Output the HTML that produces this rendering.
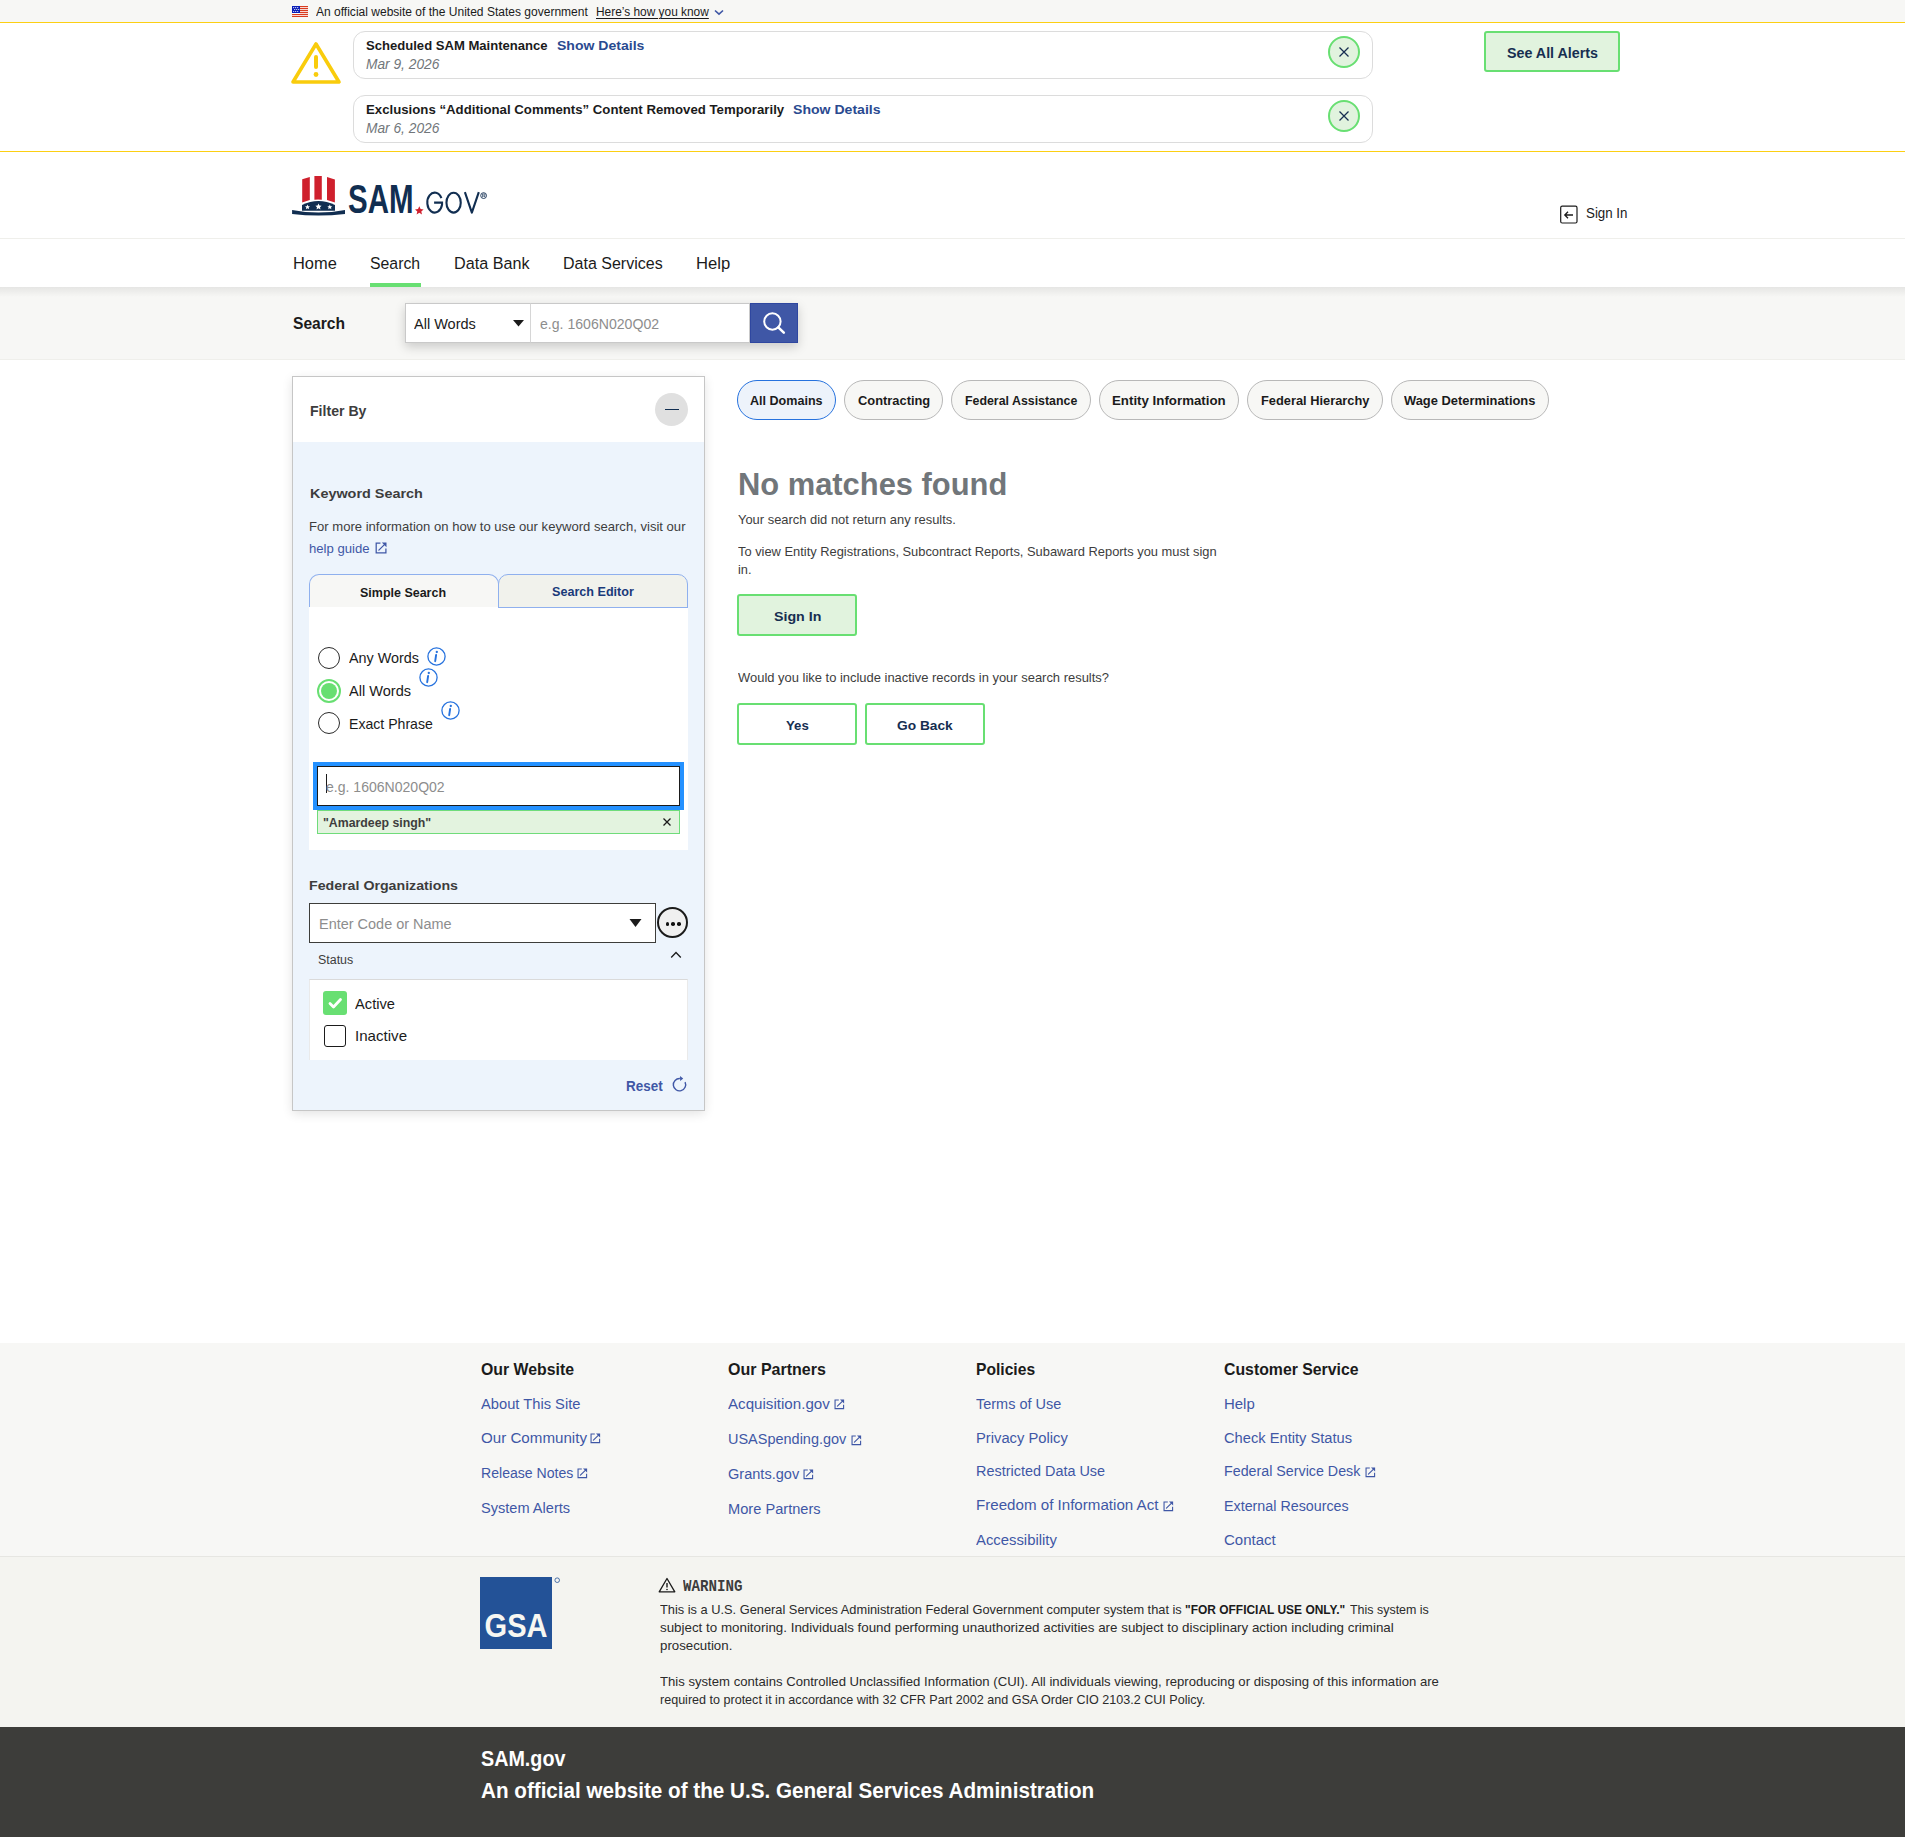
<!DOCTYPE html>
<html><head><meta charset="utf-8"><title>SAM.gov Search</title><style>
html,body{margin:0;padding:0;background:#fff;}
body{width:1905px;height:1837px;position:relative;overflow:hidden;font-family:"Liberation Sans", sans-serif;}
.t{position:absolute;white-space:nowrap;line-height:1;font-family:"Liberation Sans", sans-serif;}
.b{position:absolute;}
</style></head>
<body>
<div class="b" style="left:0px;top:0px;width:1905px;height:22px;background:#f7f7f5"></div>
<div class="b" style="left:0px;top:22px;width:1905px;height:1px;background:#fccf13"></div>
<svg class="b" style="left:292px;top:6px" width="16" height="11" viewBox="0 0 16 11">
<rect x="0" y="0" width="16" height="11" fill="#fff"/>
<g fill="#d83b1e"><rect x="8" y="0" width="8" height="1.2"/><rect x="8" y="2" width="8" height="1.2"/><rect x="8" y="4" width="8" height="1.2"/><rect x="8" y="6" width="8" height="1.2"/><rect x="0" y="8" width="16" height="1.2"/><rect x="0" y="10" width="16" height="1"/></g>
<rect x="0" y="0" width="8" height="7" fill="#0b1fb8"/>
<g fill="#fff"><circle cx="1.7" cy="1.6" r=".6"/><circle cx="3.7" cy="1.6" r=".6"/><circle cx="5.7" cy="1.6" r=".6"/><circle cx="2.7" cy="3.5" r=".6"/><circle cx="4.7" cy="3.5" r=".6"/><circle cx="6.7" cy="3.5" r=".6"/><circle cx="1.7" cy="5.5" r=".6"/><circle cx="3.7" cy="5.5" r=".6"/><circle cx="5.7" cy="5.5" r=".6"/></g>
</svg>
<div class="t " style="left:315.70px;top:6.00px;font-size:12.3px;font-weight:400;color:#1b1b1b;transform:scaleX(0.9779);transform-origin:0 0;">An official website of the United States government</div>
<div class="t " style="left:596.00px;top:6.00px;font-size:12.3px;font-weight:400;color:#1b1b1b;transform:scaleX(0.9672);transform-origin:0 0;text-decoration:underline;text-underline-offset:2px;">Here’s how you know</div>
<svg class="b" style="left:714px;top:9px" width="10" height="7" viewBox="0 0 10 7"><path d="M1 1.5 L5 5.2 L9 1.5" fill="none" stroke="#3f57a6" stroke-width="1.6"/></svg>
<div class="b" style="left:0px;top:151px;width:1905px;height:1px;background:#fccf13"></div>
<svg class="b" style="left:290px;top:40px" width="52" height="46" viewBox="0 0 52 46">
<path d="M26 4 L49 42 L3 42 Z" fill="none" stroke="#f9cc0c" stroke-width="3.6" stroke-linejoin="round"/>
<rect x="24" y="15" width="4" height="14" rx="2" fill="#f9cc0c"/><circle cx="26" cy="34.5" r="2.4" fill="#f9cc0c"/>
</svg>
<div class="b" style="left:352.5px;top:31px;width:1020.5px;height:48px;border:1px solid #dcdcdc;border-radius:12px;box-sizing:border-box;background:#fff"></div>
<div class="t " style="left:365.60px;top:39.00px;font-size:13.5px;font-weight:700;color:#1b1b1b;transform:scaleX(0.9685);transform-origin:0 0;">Scheduled SAM Maintenance</div>
<div class="t " style="left:556.60px;top:39.00px;font-size:13.5px;font-weight:700;color:#2a4a90;transform:scaleX(1.0400);transform-origin:0 0;">Show Details</div>
<div class="t " style="left:365.60px;top:57.00px;font-size:14.9px;font-weight:400;color:#71767a;font-style:italic;transform:scaleX(0.9225);transform-origin:0 0;">Mar 9, 2026</div>
<div class="b" style="left:1328px;top:36px;width:32px;height:32px;border:2px solid #68df72;border-radius:50%;background:#e1f3de;box-sizing:border-box"></div>
<svg class="b" style="left:1338px;top:46px" width="12" height="12" viewBox="0 0 12 12"><path d="M1.5 1.5 L10.5 10.5 M10.5 1.5 L1.5 10.5" stroke="#162e51" stroke-width="1.25"/></svg>
<div class="b" style="left:352.5px;top:95px;width:1020.5px;height:48px;border:1px solid #dcdcdc;border-radius:12px;box-sizing:border-box;background:#fff"></div>
<div class="t " style="left:365.60px;top:103.00px;font-size:13.5px;font-weight:700;color:#1b1b1b;transform:scaleX(0.9786);transform-origin:0 0;">Exclusions “Additional Comments” Content Removed Temporarily</div>
<div class="t " style="left:792.90px;top:103.00px;font-size:13.5px;font-weight:700;color:#2a4a90;transform:scaleX(1.0424);transform-origin:0 0;">Show Details</div>
<div class="t " style="left:365.60px;top:121.00px;font-size:14.9px;font-weight:400;color:#71767a;font-style:italic;transform:scaleX(0.9225);transform-origin:0 0;">Mar 6, 2026</div>
<div class="b" style="left:1328px;top:100px;width:32px;height:32px;border:2px solid #68df72;border-radius:50%;background:#e1f3de;box-sizing:border-box"></div>
<svg class="b" style="left:1338px;top:110px" width="12" height="12" viewBox="0 0 12 12"><path d="M1.5 1.5 L10.5 10.5 M10.5 1.5 L1.5 10.5" stroke="#162e51" stroke-width="1.25"/></svg>
<div class="b" style="left:1484px;top:31px;width:136px;height:41px;border:2px solid #68df72;border-radius:3px;background:#e1f3de;box-sizing:border-box"></div>
<div class="t " style="left:1507.00px;top:47.00px;font-size:13.8px;font-weight:700;color:#162e51;transform:scaleX(1.0344);transform-origin:0 0;">See All Alerts</div>
<svg class="b" style="left:291px;top:175px" width="200" height="42" viewBox="0 0 200 42">
<path d="M11.2 4.2 L18.8 1.9 L18.8 25 L11.2 27.6 Z" fill="#cf202d"/>
<path d="M23.4 1.1 H30.8 V24.7 Q27.1 24.4 23.4 24.7 Z" fill="#cf202d"/>
<path d="M36 1.9 L43.9 4.4 L43.9 27.6 L36 25 Z" fill="#cf202d"/>
<path d="M11 29.9 Q27.4 22.1 44 29.9 L44 35.7 L11 35.7 Z" fill="#112e51"/>
<g fill="#fff"><path d="M16.5 29.6 l.75 1.55 1.7.2-1.25 1.15.35 1.7-1.55-.85-1.55.85.35-1.7-1.25-1.15 1.7-.2z"/><path d="M27.5 28.6 l.95 1.95 2.15.25-1.6 1.45.45 2.15-1.95-1.05-1.95 1.05.45-2.15-1.6-1.45 2.15-.25z"/><path d="M38.8 29.6 l.75 1.55 1.7.2-1.25 1.15.35 1.7-1.55-.85-1.55.85.35-1.7-1.25-1.15 1.7-.2z"/></g>
<path d="M1.1 34.9 Q27.5 40.1 54 34.9 L54 39 Q27.5 42.2 1.1 39 Z" fill="#112e51"/>
<path d="M128.3 31.3 l1.3 2.8 3 .3-2.3 2 .7 3-2.7-1.6-2.7 1.6.7-3-2.3-2 3-.3z" fill="#d0202e"/>
</svg>
<div class="t " style="left:347.70px;top:179.00px;font-size:40.5px;font-weight:700;color:#112e51;transform:scaleX(0.7274);transform-origin:0 0;">SAM</div>
<svg class="b" style="left:420px;top:185px" width="72" height="35" viewBox="0 0 72 35">
<g fill="none" stroke="#112e51" stroke-width="2.1">
<path d="M21.4 13.1 A7.45 9.95 0 1 0 22.05 19.6 L22.05 17.6 L14.1 17.6"/>
<ellipse cx="33.6" cy="17.7" rx="7.15" ry="9.95"/>
<path d="M44.9 7.1 L51.85 27.6 L58.8 7.1" stroke-linejoin="round"/>
<circle cx="63.6" cy="10.6" r="2.9" stroke-width=".9"/>
</g>
<path d="M62.6 12.2 V9 H64 Q65.2 9 65.2 10 Q65.2 11 64 11 H63 M64.2 11 L65.2 12.2" fill="none" stroke="#112e51" stroke-width=".7"/>
</svg>
<svg class="b" style="left:1560px;top:205px" width="18" height="19" viewBox="0 0 18 19"><rect x="0.7" y="1.2" width="16.3" height="16.8" rx="1.5" fill="none" stroke="#1b1b1b" stroke-width="1.2"/><path d="M13 10 H5 M8 6.8 L4.8 10 L8 13.2" fill="none" stroke="#1b1b1b" stroke-width="1.3"/></svg>
<div class="t " style="left:1586.10px;top:205.00px;font-size:15.4px;font-weight:400;color:#1b1b1b;transform:scaleX(0.8651);transform-origin:0 0;">Sign In</div>
<div class="b" style="left:0px;top:238px;width:1905px;height:1px;background:#efefeb"></div>
<div class="t " style="left:292.80px;top:256.00px;font-size:16.9px;font-weight:400;color:#1b1b1b;transform:scaleX(0.9729);transform-origin:0 0;">Home</div>
<div class="t " style="left:370.10px;top:256.00px;font-size:16.9px;font-weight:400;color:#1b1b1b;transform:scaleX(0.9370);transform-origin:0 0;">Search</div>
<div class="t " style="left:454.20px;top:256.00px;font-size:16.9px;font-weight:400;color:#1b1b1b;transform:scaleX(0.9569);transform-origin:0 0;">Data Bank</div>
<div class="t " style="left:563.10px;top:256.00px;font-size:16.9px;font-weight:400;color:#1b1b1b;transform:scaleX(0.9477);transform-origin:0 0;">Data Services</div>
<div class="t " style="left:695.90px;top:256.00px;font-size:16.9px;font-weight:400;color:#1b1b1b;transform:scaleX(0.9848);transform-origin:0 0;">Help</div>
<div class="b" style="left:370px;top:283px;width:51px;height:4px;background:#68df72"></div>
<div class="b" style="left:0px;top:287px;width:1905px;height:73px;background:#f7f7f5;border-bottom:1px solid #efefeb;box-sizing:border-box"></div>
<div class="b" style="left:0px;top:287px;width:1905px;height:10px;background:linear-gradient(rgba(0,0,0,0.07),rgba(0,0,0,0))"></div>
<div class="t " style="left:292.70px;top:315.00px;font-size:16.5px;font-weight:700;color:#1b1b1b;transform:scaleX(0.9450);transform-origin:0 0;">Search</div>
<div class="b" style="left:405px;top:303px;width:393px;height:40px;box-shadow:0 4px 10px rgba(0,0,0,0.18);background:#fff"></div>
<div class="b" style="left:405px;top:303px;width:126px;height:40px;border:1px solid #c9c9c9;box-sizing:border-box;background:#fff"></div>
<div class="t " style="left:414.00px;top:316.00px;font-size:15.1px;font-weight:400;color:#1b1b1b;transform:scaleX(0.9623);transform-origin:0 0;">All Words</div>
<svg class="b" style="left:513px;top:320px" width="11" height="7" viewBox="0 0 11 7"><path d="M0 0 H11 L5.5 6.5 Z" fill="#1b1b1b"/></svg>
<div class="b" style="left:530px;top:303px;width:220px;height:40px;border:1px solid #c9c9c9;border-left:1px solid #d6d6d6;box-sizing:border-box;background:#fff"></div>
<div class="t " style="left:540.20px;top:316.00px;font-size:15.1px;font-weight:400;color:#8d8d8d;transform:scaleX(0.9334);transform-origin:0 0;">e.g. 1606N020Q02</div>
<div class="b" style="left:750px;top:303px;width:48px;height:40px;background:#3f57a6;border:1px solid #2f47a0;box-sizing:border-box"></div>
<svg class="b" style="left:760px;top:311px" width="28" height="26" viewBox="0 0 28 26"><circle cx="12.4" cy="10.5" r="8.2" fill="none" stroke="#fff" stroke-width="2"/><path d="M18.3 16.4 L23.8 21.6" stroke="#fff" stroke-width="2.6" stroke-linecap="round"/></svg>
<div class="b" style="left:292px;top:376px;width:413px;height:735px;border:1px solid #c6c6c6;box-sizing:border-box;background:#edf4fc;box-shadow:0 3px 10px rgba(0,0,0,0.11)"></div>
<div class="b" style="left:293px;top:377px;width:411px;height:65px;background:#fff"></div>
<div class="t " style="left:309.60px;top:404.00px;font-size:14.5px;font-weight:700;color:#3d3d3d;transform:scaleX(0.9724);transform-origin:0 0;">Filter By</div>
<div class="b" style="left:655px;top:393px;width:33px;height:33px;background:#e0e0e0;border-radius:50%"></div>
<div class="b" style="left:665px;top:408.7px;width:14px;height:1.6px;background:#112e51"></div>
<div class="t " style="left:309.60px;top:487.00px;font-size:13.7px;font-weight:700;color:#3d3d3d;transform:scaleX(1.0518);transform-origin:0 0;">Keyword Search</div>
<div class="t " style="left:309.40px;top:520.00px;font-size:13.3px;font-weight:400;color:#3d3d3d;transform:scaleX(0.9835);transform-origin:0 0;">For more information on how to use our keyword search, visit our</div>
<div class="t " style="left:309.40px;top:542.00px;font-size:13.3px;font-weight:400;color:#3f57a6;transform:scaleX(0.9873);transform-origin:0 0;">help guide</div>
<svg class="b" style="left:374.8px;top:542.2px" width="12.5" height="12.5" viewBox="0 0 11 11"><path d="M4.8 1.05 H1.05 V9.6 H9.6 V5.8" fill="none" stroke="#3f57a6" stroke-width="1.1"/><path d="M3.4 7.2 L8.3 2.3" fill="none" stroke="#3f57a6" stroke-width="1.1" stroke-linecap="round"/><path d="M6 0.5 H10.1 V4.6 Z" fill="#3f57a6"/></svg>
<div class="b" style="left:309px;top:574px;width:190px;height:34px;background:#f7f7f5;border:1px solid #8fb0ee;border-bottom:none;border-radius:10px 10px 0 0;box-sizing:border-box"></div>
<div class="b" style="left:498px;top:574px;width:190px;height:34px;background:#f1f2ec;border:1px solid #8fb0ee;border-radius:10px 10px 0 0;box-sizing:border-box"></div>
<div class="t " style="left:360.30px;top:587.00px;font-size:12.2px;font-weight:700;color:#1b1b1b;transform:scaleX(1.0243);transform-origin:0 0;">Simple Search</div>
<div class="t " style="left:552.00px;top:586.00px;font-size:12.2px;font-weight:700;color:#1a3a7a;transform:scaleX(1.0328);transform-origin:0 0;">Search Editor</div>
<div class="b" style="left:309px;top:607px;width:379px;height:243px;background:#fff"></div>
<div class="b" style="left:498px;top:607px;width:190px;height:1px;background:#8fb0ee"></div>
<div class="b" style="left:318px;top:647px;width:22px;height:22px;border:1.6px solid #2b2b2b;border-radius:50%;box-sizing:border-box;background:#fff"></div>
<div class="t " style="left:349.20px;top:650.00px;font-size:15px;font-weight:400;color:#1b1b1b;transform:scaleX(0.9582);transform-origin:0 0;">Any Words</div>
<svg class="b" style="left:426.5px;top:646.5px" width="19" height="19" viewBox="0 0 19 19"><circle cx="9.5" cy="9.5" r="8.6" fill="none" stroke="#2672de" stroke-width="1.3"/><path d="M9.1 8 L8.2 14.2" stroke="#2672de" stroke-width="1.9" stroke-linecap="round"/><circle cx="9.8" cy="5" r="1.15" fill="#2672de"/></svg>
<div class="b" style="left:317px;top:679px;width:24px;height:24px;border:2.2px solid #68df72;border-radius:50%;box-sizing:border-box;background:#fff"></div>
<div class="b" style="left:321px;top:683px;width:16px;height:16px;background:#68df72;border-radius:50%"></div>
<div class="t " style="left:349.20px;top:683.00px;font-size:15px;font-weight:400;color:#1b1b1b;transform:scaleX(0.9703);transform-origin:0 0;">All Words</div>
<svg class="b" style="left:418.5px;top:667.5px" width="19" height="19" viewBox="0 0 19 19"><circle cx="9.5" cy="9.5" r="8.6" fill="none" stroke="#2672de" stroke-width="1.3"/><path d="M9.1 8 L8.2 14.2" stroke="#2672de" stroke-width="1.9" stroke-linecap="round"/><circle cx="9.8" cy="5" r="1.15" fill="#2672de"/></svg>
<div class="b" style="left:318px;top:712px;width:22px;height:22px;border:1.6px solid #2b2b2b;border-radius:50%;box-sizing:border-box;background:#fff"></div>
<div class="t " style="left:349.20px;top:716.00px;font-size:15px;font-weight:400;color:#1b1b1b;transform:scaleX(0.9397);transform-origin:0 0;">Exact Phrase</div>
<svg class="b" style="left:440.5px;top:700.5px" width="19" height="19" viewBox="0 0 19 19"><circle cx="9.5" cy="9.5" r="8.6" fill="none" stroke="#2672de" stroke-width="1.3"/><path d="M9.1 8 L8.2 14.2" stroke="#2672de" stroke-width="1.9" stroke-linecap="round"/><circle cx="9.8" cy="5" r="1.15" fill="#2672de"/></svg>
<div class="b" style="left:313px;top:762px;width:371px;height:48px;background:#2491ff"></div>
<div class="b" style="left:317px;top:766px;width:363px;height:40px;background:#fff;border:1.5px solid #1b1b1b;box-sizing:border-box"></div>
<div class="b" style="left:326px;top:774px;width:1.3px;height:19px;background:#1b1b1b"></div>
<div class="t " style="left:326.20px;top:779.00px;font-size:15.1px;font-weight:400;color:#8d8d8d;transform:scaleX(0.9303);transform-origin:0 0;">e.g. 1606N020Q02</div>
<div class="b" style="left:317px;top:810px;width:363px;height:24px;background:#e3f3df;border:1px solid #6fdc7a;box-sizing:border-box"></div>
<div class="t " style="left:323.00px;top:817.00px;font-size:12.6px;font-weight:700;color:#3d3d3d;transform:scaleX(0.9775);transform-origin:0 0;">&quot;Amardeep singh&quot;</div>
<svg class="b" style="left:662px;top:817px" width="10" height="10" viewBox="0 0 10 10"><path d="M1.5 1.5 L8.5 8.5 M8.5 1.5 L1.5 8.5" stroke="#1b1b1b" stroke-width="1.3"/></svg>
<div class="t " style="left:309.40px;top:879.00px;font-size:13.7px;font-weight:700;color:#3d3d3d;transform:scaleX(1.0360);transform-origin:0 0;">Federal Organizations</div>
<div class="b" style="left:309px;top:903px;width:347px;height:40px;background:#fff;border:1px solid #3d3d3a;box-sizing:border-box"></div>
<div class="t " style="left:318.50px;top:916.00px;font-size:15.1px;font-weight:400;color:#8d8d8d;transform:scaleX(0.9584);transform-origin:0 0;">Enter Code or Name</div>
<svg class="b" style="left:629px;top:918px" width="13" height="10" viewBox="0 0 13 10"><path d="M0.5 1 H12.5 L6.5 9 Z" fill="#1b1b1b"/></svg>
<div class="b" style="left:657px;top:907px;width:31px;height:31px;background:#f0f0f0;border:2px solid #1b1b1b;border-radius:50%;box-sizing:border-box"></div>
<div class="b" style="left:665.5px;top:922.4px;width:3.6px;height:3.6px;background:#111;border-radius:50%"></div>
<div class="b" style="left:671.3000000000001px;top:922.4px;width:3.6px;height:3.6px;background:#111;border-radius:50%"></div>
<div class="b" style="left:677.1px;top:922.4px;width:3.6px;height:3.6px;background:#111;border-radius:50%"></div>
<div class="t " style="left:317.80px;top:954.00px;font-size:12.3px;font-weight:400;color:#3d3d3d;transform:scaleX(1.0094);transform-origin:0 0;">Status</div>
<svg class="b" style="left:670px;top:950px" width="12" height="9" viewBox="0 0 12 9"><path d="M1.2 7.5 L6 2.5 L10.8 7.5" fill="none" stroke="#1b1b1b" stroke-width="1.3"/></svg>
<div class="b" style="left:309px;top:979px;width:379px;height:81px;background:#fff;border-top:1.5px solid #dadada;border-left:1px solid #eaeaea;border-right:1px solid #eaeaea;box-sizing:border-box"></div>
<div class="b" style="left:323px;top:991px;width:24px;height:24px;background:#68df72;border-radius:3px"></div>
<svg class="b" style="left:323px;top:991px" width="24" height="24" viewBox="0 0 24 24"><path d="M7 12.5 L10.5 16 L17.5 8.5" fill="none" stroke="#fff" stroke-width="2.8" stroke-linecap="round" stroke-linejoin="round"/></svg>
<div class="t " style="left:355.00px;top:996.00px;font-size:15px;font-weight:400;color:#1b1b1b;transform:scaleX(0.9786);transform-origin:0 0;">Active</div>
<div class="b" style="left:324px;top:1025px;width:22px;height:22px;border:1.6px solid #1b1b1b;border-radius:3px;box-sizing:border-box;background:#fff"></div>
<div class="t " style="left:355.00px;top:1028.00px;font-size:15px;font-weight:400;color:#1b1b1b;transform:scaleX(1.0063);transform-origin:0 0;">Inactive</div>
<div class="t " style="left:625.50px;top:1078.00px;font-size:15px;font-weight:700;color:#3f57a6;transform:scaleX(0.8979);transform-origin:0 0;">Reset</div>
<svg class="b" style="left:671px;top:1075px" width="17" height="18" viewBox="0 0 17 18"><path d="M14.07 7.1 A6.15 6.15 0 1 1 8.9 3.56" fill="none" stroke="#3f57a6" stroke-width="1.4"/><path d="M9 1 L12.2 3.5 L9.2 5.9 Z" fill="#3f57a6"/></svg>
<div class="b" style="left:737px;top:380px;width:99px;height:40px;border:1.3px solid #2672de;background:#edf3fb;border-radius:20px;box-sizing:border-box"></div>
<div class="t " style="left:750.30px;top:395.00px;font-size:12.2px;font-weight:700;color:#1b1b1b;transform:scaleX(1.0310);transform-origin:0 0;">All Domains</div>
<div class="b" style="left:844px;top:380px;width:99px;height:40px;border:1px solid #b8b8b8;background:#f7f7f5;border-radius:20px;box-sizing:border-box"></div>
<div class="t " style="left:857.70px;top:395.00px;font-size:12.2px;font-weight:700;color:#1b1b1b;transform:scaleX(1.0564);transform-origin:0 0;">Contracting</div>
<div class="b" style="left:951px;top:380px;width:140px;height:40px;border:1px solid #b8b8b8;background:#f7f7f5;border-radius:20px;box-sizing:border-box"></div>
<div class="t " style="left:964.80px;top:395.00px;font-size:12.2px;font-weight:700;color:#1b1b1b;transform:scaleX(1.0147);transform-origin:0 0;">Federal Assistance</div>
<div class="b" style="left:1099px;top:380px;width:140px;height:40px;border:1px solid #b8b8b8;background:#f7f7f5;border-radius:20px;box-sizing:border-box"></div>
<div class="t " style="left:1112.20px;top:395.00px;font-size:12.2px;font-weight:700;color:#1b1b1b;transform:scaleX(1.0903);transform-origin:0 0;">Entity Information</div>
<div class="b" style="left:1247px;top:380px;width:136px;height:40px;border:1px solid #b8b8b8;background:#f7f7f5;border-radius:20px;box-sizing:border-box"></div>
<div class="t " style="left:1260.70px;top:395.00px;font-size:12.2px;font-weight:700;color:#1b1b1b;transform:scaleX(1.0534);transform-origin:0 0;">Federal Hierarchy</div>
<div class="b" style="left:1391px;top:380px;width:158px;height:40px;border:1px solid #b8b8b8;background:#f7f7f5;border-radius:20px;box-sizing:border-box"></div>
<div class="t " style="left:1403.80px;top:395.00px;font-size:12.2px;font-weight:700;color:#1b1b1b;transform:scaleX(1.0583);transform-origin:0 0;">Wage Determinations</div>
<div class="t " style="left:738.20px;top:469.00px;font-size:31px;font-weight:700;color:#71767a;transform:scaleX(0.9957);transform-origin:0 0;">No matches found</div>
<div class="t " style="left:738.00px;top:514.00px;font-size:12.4px;font-weight:400;color:#3d3d3d;transform:scaleX(1.0427);transform-origin:0 0;">Your search did not return any results.</div>
<div class="t " style="left:738.00px;top:546.00px;font-size:12.4px;font-weight:400;color:#3d3d3d;transform:scaleX(1.0388);transform-origin:0 0;">To view Entity Registrations, Subcontract Reports, Subaward Reports you must sign</div>
<div class="t " style="left:738.00px;top:564.00px;font-size:12.4px;font-weight:400;color:#3d3d3d;transform:scaleX(1.0320);transform-origin:0 0;">in.</div>
<div class="b" style="left:737px;top:594px;width:120px;height:42px;border:2px solid #68df72;border-radius:3px;background:#e1f3de;box-sizing:border-box"></div>
<div class="t " style="left:773.60px;top:610.00px;font-size:13.4px;font-weight:700;color:#162e51;transform:scaleX(1.0607);transform-origin:0 0;">Sign In</div>
<div class="t " style="left:737.50px;top:672.00px;font-size:12.4px;font-weight:400;color:#3d3d3d;transform:scaleX(1.0446);transform-origin:0 0;">Would you like to include inactive records in your search results?</div>
<div class="b" style="left:737px;top:703px;width:120px;height:42px;border:2px solid #68df72;border-radius:3px;background:#fff;box-sizing:border-box"></div>
<div class="t " style="left:785.90px;top:719.00px;font-size:13.4px;font-weight:700;color:#162e51;transform:scaleX(0.9864);transform-origin:0 0;">Yes</div>
<div class="b" style="left:865px;top:703px;width:120px;height:42px;border:2px solid #68df72;border-radius:3px;background:#fff;box-sizing:border-box"></div>
<div class="t " style="left:897.20px;top:719.00px;font-size:13.4px;font-weight:700;color:#162e51;transform:scaleX(1.0257);transform-origin:0 0;">Go Back</div>
<div class="b" style="left:0px;top:1343px;width:1905px;height:214px;background:#f7f7f5"></div>
<div class="t " style="left:480.50px;top:1362.00px;font-size:16.6px;font-weight:700;color:#1b1b1b;transform:scaleX(0.9554);transform-origin:0 0;">Our Website</div>
<div class="t " style="left:480.50px;top:1396.00px;font-size:15.1px;font-weight:400;color:#3f57a6;transform:scaleX(0.9740);transform-origin:0 0;">About This Site</div>
<div class="t " style="left:480.50px;top:1430.00px;font-size:15.1px;font-weight:400;color:#3f57a6;transform:scaleX(1.0028);transform-origin:0 0;">Our Community</div>
<svg class="b" style="left:590.4px;top:1433.1999999999998px" width="11" height="11" viewBox="0 0 11 11"><path d="M4.8 1.05 H1.05 V9.6 H9.6 V5.8" fill="none" stroke="#3f57a6" stroke-width="1.1"/><path d="M3.4 7.2 L8.3 2.3" fill="none" stroke="#3f57a6" stroke-width="1.1" stroke-linecap="round"/><path d="M6 0.5 H10.1 V4.6 Z" fill="#3f57a6"/></svg>
<div class="t " style="left:480.50px;top:1465.00px;font-size:15.1px;font-weight:400;color:#3f57a6;transform:scaleX(0.9328);transform-origin:0 0;">Release Notes</div>
<svg class="b" style="left:576.8px;top:1468.3999999999999px" width="11" height="11" viewBox="0 0 11 11"><path d="M4.8 1.05 H1.05 V9.6 H9.6 V5.8" fill="none" stroke="#3f57a6" stroke-width="1.1"/><path d="M3.4 7.2 L8.3 2.3" fill="none" stroke="#3f57a6" stroke-width="1.1" stroke-linecap="round"/><path d="M6 0.5 H10.1 V4.6 Z" fill="#3f57a6"/></svg>
<div class="t " style="left:480.50px;top:1500.00px;font-size:15.1px;font-weight:400;color:#3f57a6;transform:scaleX(0.9660);transform-origin:0 0;">System Alerts</div>
<div class="t " style="left:728.20px;top:1362.00px;font-size:16.6px;font-weight:700;color:#1b1b1b;transform:scaleX(0.9644);transform-origin:0 0;">Our Partners</div>
<div class="t " style="left:728.20px;top:1396.00px;font-size:15.1px;font-weight:400;color:#3f57a6;transform:scaleX(1.0025);transform-origin:0 0;">Acquisition.gov</div>
<svg class="b" style="left:834px;top:1399.3999999999999px" width="11" height="11" viewBox="0 0 11 11"><path d="M4.8 1.05 H1.05 V9.6 H9.6 V5.8" fill="none" stroke="#3f57a6" stroke-width="1.1"/><path d="M3.4 7.2 L8.3 2.3" fill="none" stroke="#3f57a6" stroke-width="1.1" stroke-linecap="round"/><path d="M6 0.5 H10.1 V4.6 Z" fill="#3f57a6"/></svg>
<div class="t " style="left:728.20px;top:1431.00px;font-size:15.1px;font-weight:400;color:#3f57a6;transform:scaleX(0.9592);transform-origin:0 0;">USASpending.gov</div>
<svg class="b" style="left:850.5px;top:1434.8px" width="11" height="11" viewBox="0 0 11 11"><path d="M4.8 1.05 H1.05 V9.6 H9.6 V5.8" fill="none" stroke="#3f57a6" stroke-width="1.1"/><path d="M3.4 7.2 L8.3 2.3" fill="none" stroke="#3f57a6" stroke-width="1.1" stroke-linecap="round"/><path d="M6 0.5 H10.1 V4.6 Z" fill="#3f57a6"/></svg>
<div class="t " style="left:728.20px;top:1466.00px;font-size:15.1px;font-weight:400;color:#3f57a6;transform:scaleX(0.9643);transform-origin:0 0;">Grants.gov</div>
<svg class="b" style="left:803.3px;top:1469.1999999999998px" width="11" height="11" viewBox="0 0 11 11"><path d="M4.8 1.05 H1.05 V9.6 H9.6 V5.8" fill="none" stroke="#3f57a6" stroke-width="1.1"/><path d="M3.4 7.2 L8.3 2.3" fill="none" stroke="#3f57a6" stroke-width="1.1" stroke-linecap="round"/><path d="M6 0.5 H10.1 V4.6 Z" fill="#3f57a6"/></svg>
<div class="t " style="left:728.20px;top:1501.00px;font-size:15.1px;font-weight:400;color:#3f57a6;transform:scaleX(0.9691);transform-origin:0 0;">More Partners</div>
<div class="t " style="left:976.20px;top:1362.00px;font-size:16.6px;font-weight:700;color:#1b1b1b;transform:scaleX(0.9419);transform-origin:0 0;">Policies</div>
<div class="t " style="left:976.20px;top:1396.00px;font-size:15.1px;font-weight:400;color:#3f57a6;transform:scaleX(0.9591);transform-origin:0 0;">Terms of Use</div>
<div class="t " style="left:976.20px;top:1430.00px;font-size:15.1px;font-weight:400;color:#3f57a6;transform:scaleX(0.9777);transform-origin:0 0;">Privacy Policy</div>
<div class="t " style="left:976.20px;top:1463.00px;font-size:15.1px;font-weight:400;color:#3f57a6;transform:scaleX(0.9560);transform-origin:0 0;">Restricted Data Use</div>
<div class="t " style="left:976.20px;top:1497.00px;font-size:15.1px;font-weight:400;color:#3f57a6;transform:scaleX(1.0022);transform-origin:0 0;">Freedom of Information Act</div>
<svg class="b" style="left:1162.6px;top:1500.6px" width="11" height="11" viewBox="0 0 11 11"><path d="M4.8 1.05 H1.05 V9.6 H9.6 V5.8" fill="none" stroke="#3f57a6" stroke-width="1.1"/><path d="M3.4 7.2 L8.3 2.3" fill="none" stroke="#3f57a6" stroke-width="1.1" stroke-linecap="round"/><path d="M6 0.5 H10.1 V4.6 Z" fill="#3f57a6"/></svg>
<div class="t " style="left:976.20px;top:1532.00px;font-size:15.1px;font-weight:400;color:#3f57a6;transform:scaleX(0.9840);transform-origin:0 0;">Accessibility</div>
<div class="t " style="left:1224.30px;top:1362.00px;font-size:16.6px;font-weight:700;color:#1b1b1b;transform:scaleX(0.9534);transform-origin:0 0;">Customer Service</div>
<div class="t " style="left:1224.30px;top:1396.00px;font-size:15.1px;font-weight:400;color:#3f57a6;transform:scaleX(0.9893);transform-origin:0 0;">Help</div>
<div class="t " style="left:1224.30px;top:1430.00px;font-size:15.1px;font-weight:400;color:#3f57a6;transform:scaleX(0.9723);transform-origin:0 0;">Check Entity Status</div>
<div class="t " style="left:1224.30px;top:1463.00px;font-size:15.1px;font-weight:400;color:#3f57a6;transform:scaleX(0.9451);transform-origin:0 0;">Federal Service Desk</div>
<svg class="b" style="left:1364.7px;top:1466.6px" width="11" height="11" viewBox="0 0 11 11"><path d="M4.8 1.05 H1.05 V9.6 H9.6 V5.8" fill="none" stroke="#3f57a6" stroke-width="1.1"/><path d="M3.4 7.2 L8.3 2.3" fill="none" stroke="#3f57a6" stroke-width="1.1" stroke-linecap="round"/><path d="M6 0.5 H10.1 V4.6 Z" fill="#3f57a6"/></svg>
<div class="t " style="left:1224.30px;top:1498.00px;font-size:15.1px;font-weight:400;color:#3f57a6;transform:scaleX(0.9465);transform-origin:0 0;">External Resources</div>
<div class="t " style="left:1224.30px;top:1532.00px;font-size:15.1px;font-weight:400;color:#3f57a6;transform:scaleX(0.9939);transform-origin:0 0;">Contact</div>
<div class="b" style="left:0px;top:1556px;width:1905px;height:172px;background:#f4f4f0;border-top:1px solid #e6e6e2;box-sizing:border-box"></div>
<svg class="b" style="left:480px;top:1577px" width="82" height="72" viewBox="0 0 82 72">
<rect x="0" y="0" width="72" height="72" fill="#235297"/>
<text x="4.6" y="60.1" font-family="Liberation Sans, sans-serif" font-weight="700" font-size="34" fill="#f7f7f2" textLength="63" lengthAdjust="spacingAndGlyphs">GSA</text>
<circle cx="77.2" cy="3.2" r="2.3" fill="none" stroke="#235297" stroke-width=".8"/>
</svg>
<svg class="b" style="left:658px;top:1577px" width="18" height="16" viewBox="0 0 18 16"><path d="M9 1.5 L16.8 14.8 H1.2 Z" fill="none" stroke="#1b1b1b" stroke-width="1.3" stroke-linejoin="round"/><path d="M9 6 V10.5" stroke="#1b1b1b" stroke-width="1.4"/><circle cx="9" cy="12.5" r=".8" fill="#1b1b1b"/></svg>
<div class="t " style="left:683.20px;top:1579.00px;font-size:16.3px;font-weight:700;color:#3d3d3d;transform:scaleX(0.8706);transform-origin:0 0;font-family:'Liberation Mono', monospace;">WARNING</div>
<div class="t " style="left:659.50px;top:1604.00px;font-size:12.4px;font-weight:400;color:#2b2b2b;transform:scaleX(1.0337);transform-origin:0 0;">This is a U.S. General Services Administration Federal Government computer system that is</div>
<div class="t " style="left:1185.40px;top:1604.00px;font-size:12.4px;font-weight:700;color:#1b1b1b;transform:scaleX(0.9651);transform-origin:0 0;">&quot;FOR OFFICIAL USE ONLY.&quot;</div>
<div class="t " style="left:1349.70px;top:1604.00px;font-size:12.4px;font-weight:400;color:#2b2b2b;transform:scaleX(1.0044);transform-origin:0 0;">This system is</div>
<div class="t " style="left:659.50px;top:1622.00px;font-size:12.4px;font-weight:400;color:#2b2b2b;transform:scaleX(1.0783);transform-origin:0 0;">subject to monitoring. Individuals found performing unauthorized activities are subject to disciplinary action including criminal</div>
<div class="t " style="left:659.50px;top:1640.00px;font-size:12.4px;font-weight:400;color:#2b2b2b;transform:scaleX(1.0713);transform-origin:0 0;">prosecution.</div>
<div class="t " style="left:659.50px;top:1676.00px;font-size:12.4px;font-weight:400;color:#2b2b2b;transform:scaleX(1.0590);transform-origin:0 0;">This system contains Controlled Unclassified Information (CUI). All individuals viewing, reproducing or disposing of this information are</div>
<div class="t " style="left:659.50px;top:1694.00px;font-size:12.4px;font-weight:400;color:#2b2b2b;transform:scaleX(1.0130);transform-origin:0 0;">required to protect it in accordance with 32 CFR Part 2002 and GSA Order CIO 2103.2 CUI Policy.</div>
<div class="b" style="left:0px;top:1727px;width:1905px;height:110px;background:#3d3d3a"></div>
<div class="t " style="left:480.50px;top:1748.00px;font-size:21.9px;font-weight:700;color:#fff;transform:scaleX(0.9015);transform-origin:0 0;">SAM.gov</div>
<div class="t " style="left:480.50px;top:1780.00px;font-size:21.9px;font-weight:700;color:#fff;transform:scaleX(0.9434);transform-origin:0 0;">An official website of the U.S. General Services Administration</div>
</body></html>
